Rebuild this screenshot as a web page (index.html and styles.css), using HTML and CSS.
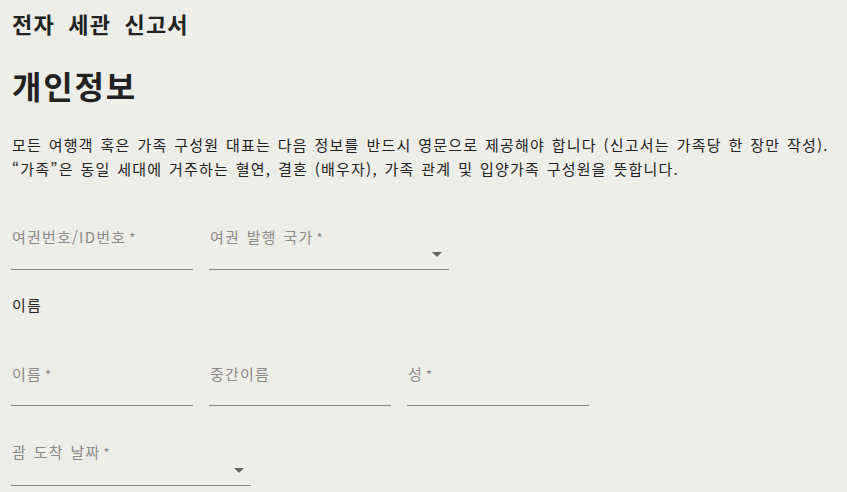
FILE: index.html
```html
<!DOCTYPE html>
<html lang="ko">
<head>
<meta charset="UTF-8" />
<meta name="viewport" content="width=device-width, initial-scale=1" />
<title>전자 세관 신고서</title>
<link rel="stylesheet" href="styles.css">
</head>
<body>

<h1 class="app-title">전자 세관 신고서</h1>

<h2 class="section-title">개인정보</h2>

<p class="intro">모든 여행객 혹은 가족 구성원 대표는 다음 정보를 반드시 영문으로 제공해야 합니다 (신고서는 가족당 한 장만 작성).<br>“가족”은 동일 세대에 거주하는 혈연, 결혼 (배우자), 가족 관계 및 입양가족 구성원을 뜻합니다.</p>

<div class="form-row row-passport">
  <div class="field w-182">
    <label class="field-label">여권번호/ID번호<span class="req">*</span></label>
  </div>
  <div class="field w-240">
    <label class="field-label">여권 발행 국가<span class="req">*</span></label>
    <span class="arrow"></span>
  </div>
</div>

<div class="group-label">이름</div>

<div class="form-row row-name">
  <div class="field w-182">
    <label class="field-label">이름<span class="req">*</span></label>
  </div>
  <div class="field w-182">
    <label class="field-label">중간이름</label>
  </div>
  <div class="field w-182">
    <label class="field-label">성<span class="req">*</span></label>
  </div>
</div>

<div class="form-row row-arrival">
  <div class="field w-240">
    <label class="field-label">괌 도착 날짜<span class="req">*</span></label>
    <span class="arrow"></span>
  </div>
</div>

</body>
</html>
```

FILE: styles.css
```css
body {
  font-family: "Noto Sans CJK KR", "Noto Sans", sans-serif;
  margin: 0;
  padding: 0 11px;
  background: #eeeee9;
  color: #222;
  letter-spacing: 1.2px;
}
.app-title {
  font-size: 22px;
  font-weight: bold;
  margin: 4px 0 0 1px;
  line-height: 38px;
  word-spacing: 6px;
}
.section-title {
  font-size: 32px;
  font-weight: bold;
  margin: 20px 0 0 1px;
  line-height: 46px;
  letter-spacing: 1.8px;
}
.intro {
  font-size: 15px;
  line-height: 24px;
  margin: 25px -11px 0 1px;
  word-spacing: 1.4px;
  white-space: nowrap;
}
/* 입력 필드 */
.form-row {
  display: flex;
  gap: 16px;
}
.field {
  position: relative;
  border-bottom: 1px solid #8a8a88;
}
.w-182 { width: 182px; }
.w-240 { width: 240px; }
.field-label {
  display: block;
  font-size: 15px;
  color: #8a8a88;
  line-height: 22px;
  padding-left: 1px;
  word-spacing: 1.4px;
}
.req {
  margin-left: 3px;
  font-size: 13px;
}
.arrow {
  position: absolute;
  right: 7px;
  bottom: 12px;
  width: 0;
  height: 0;
  border-left: 5px solid transparent;
  border-right: 5px solid transparent;
  border-top: 5px solid #666;
}
.group-label {
  font-size: 15px;
  line-height: 22px;
  margin: 24px 0 0 1px;
  color: #222;
}
.row-passport { margin-top: 18px; }
.row-passport .field { height: 70px; }
.row-passport .field-label { margin-top: 27px; }
.row-name .field { height: 89px; }
.row-name .field-label { margin-top: 47px; }
.row-arrival .field { height: 79px; }
.row-arrival .field-label { margin-top: 35px; }
```
